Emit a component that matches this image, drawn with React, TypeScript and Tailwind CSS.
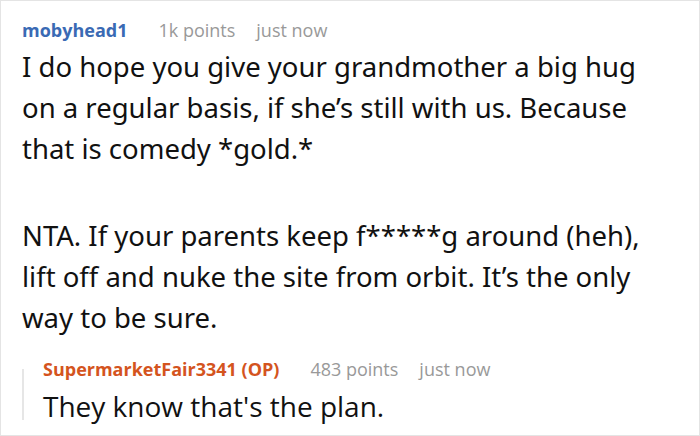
const font = { fontFamily: '"Open Sans", "Noto Sans", sans-serif' }
const body = { fontFamily: '"Noto Sans", "Open Sans", sans-serif' }

function Meta({ name, points, color }: { name: string; points: string; color: string }) {
  return (
    <div className="flex items-baseline text-[18px] leading-[24px]">
      <span className={`font-bold ${color}`}>{name}</span>
      <span className="ml-[31px] text-[#999999]">{points}</span>
      <span className="ml-[21px] text-[#999999]">just now</span>
    </div>
  )
}

export default function App() {
  return (
    <div style={font} className="w-[700px] h-[436px] bg-white border border-[#e4e4e4] overflow-hidden">
      <div className="pl-[21px] pt-[17px]">
        <Meta name="mobyhead1" points="1k points" color="text-[#3a6ab4]" />
        <div style={body} className="text-[27.5px] leading-[41px] text-[#111111] mt-[4px]">
          <p>
            I do hope you give your grandmother a big hug
            <br />
            on a regular basis, if she’s still with us. Because
            <br />
            that is comedy *gold.*
          </p>
          <p className="mt-[46px]">
            NTA. If your parents keep f*****g around (heh),
            <br />
            lift off and nuke the site from orbit. It’s the only
            <br />
            way to be sure.
          </p>
        </div>
        <div className="mt-[19px] flex">
          <div className="w-[2px] bg-[#e6e6e6] mt-[12px] mb-[4px]" />
          <div className="pl-[19px]">
            <Meta name="SupermarketFair3341 (OP)" points="483 points" color="text-[#d4541e]" />
            <div className="text-[28px] leading-[36px] text-[#111111] mt-[7px]">They know that's the plan.</div>
          </div>
        </div>
      </div>
    </div>
  )
}
